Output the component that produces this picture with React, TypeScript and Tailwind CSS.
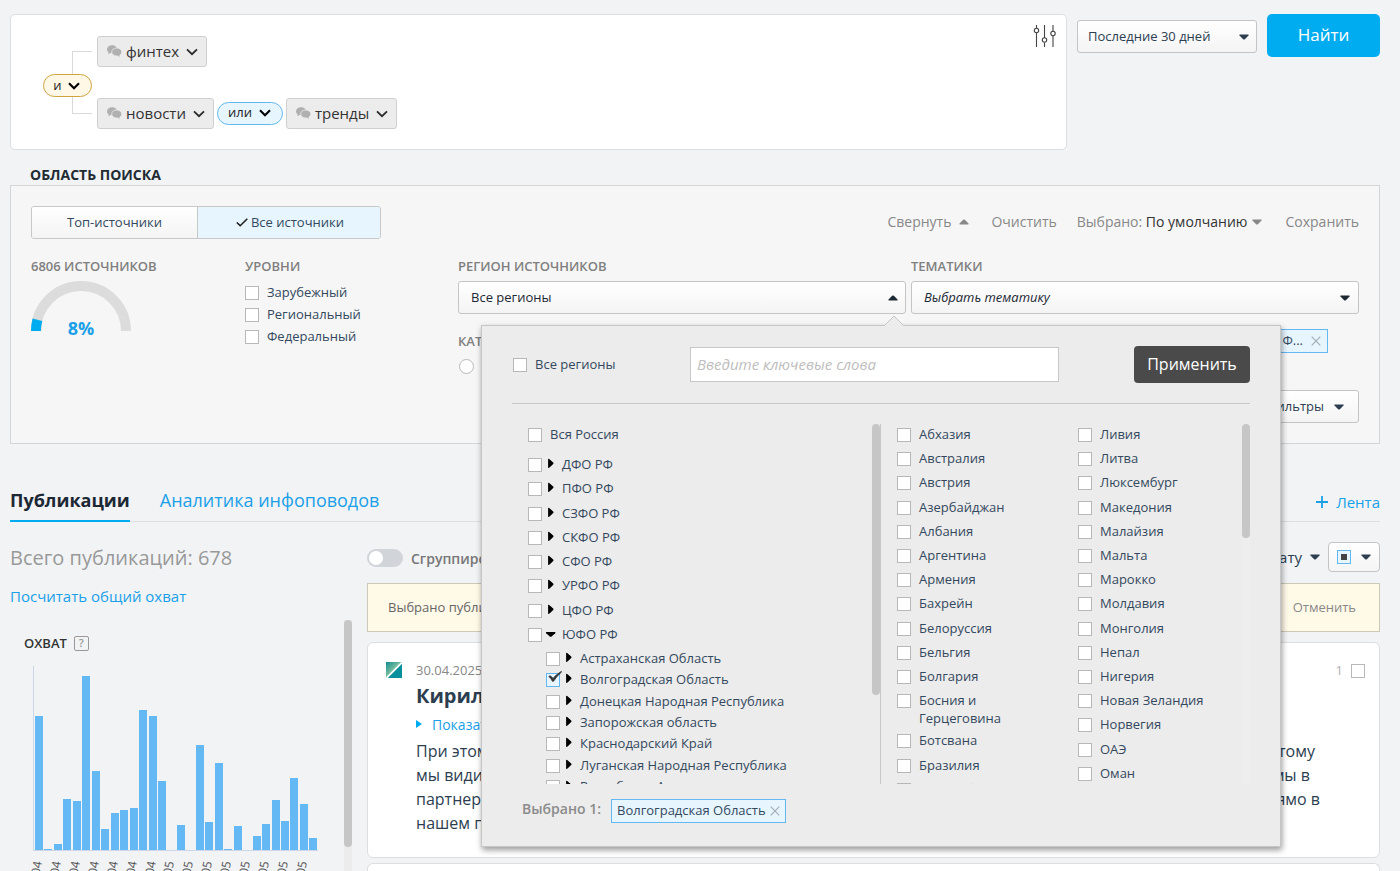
import type { ReactNode } from 'react'

const topCountries = [
  'Абхазия', 'Австралия', 'Австрия', 'Азербайджан', 'Албания', 'Аргентина', 'Армения', 'Бахрейн',
  'Белоруссия', 'Бельгия', 'Болгария', 'Босния и Герцеговина', 'Ботсвана', 'Бразилия', 'Великобритания',
]
const moreCountries = [
  'Ливия', 'Литва', 'Люксембург', 'Македония', 'Малайзия', 'Мальта', 'Марокко', 'Молдавия',
  'Монголия', 'Непал', 'Нигерия', 'Новая Зеландия', 'Норвегия', 'ОАЭ', 'Оман',
]
const districts = ['ДФО РФ', 'ПФО РФ', 'СЗФО РФ', 'СКФО РФ', 'СФО РФ', 'УРФО РФ', 'ЦФО РФ', 'ЮФО РФ']
const southern = [
  'Астраханская Область', 'Волгоградская Область', 'Донецкая Народная Республика', 'Запорожская область',
  'Краснодарский Край', 'Луганская Народная Республика', 'Республика Адыгея',
]
const reach = [
  134, 1, 6, 51, 49, 174, 79, 21, 37, 40, 42, 140, 134, 69, 0, 25, 0, 105, 28, 87, 1, 24, 0, 14, 26, 50, 29,
  72, 46, 12,
]

function Caret({ up = false, className = '' }: { up?: boolean; className?: string }) {
  return (
    <svg viewBox="0 0 10 6" fill="currentColor" className={`h-[6px] w-[10px] shrink-0 ${className}`}>
      {up ? (
        <path d="M.8 5.400h8.400q.8-.2.3-.9L5.900.8q-.9-.7-1.800 0L.5 4.500q-.5.7.3.9z" />
      ) : (
        <path d="M.8.6h8.400q.8.2.3.9L5.900 5.200q-.9.7-1.800 0L.5 1.500Q0 .8.8.6z" />
      )}
    </svg>
  )
}

function Chevron({ heavy = false }: { heavy?: boolean }) {
  return (
    <svg viewBox="0 0 12 8" fill="none" stroke={heavy ? '#000' : '#2b2b2b'} strokeWidth={heavy ? 2.1 : 1.8} className="h-2 w-3 shrink-0">
      <path d="M1 1.300 6 6.200 11 1.300" />
    </svg>
  )
}

function Cross() {
  return (
    <svg viewBox="0 0 10 10" stroke="#a3abb0" strokeWidth="1.1" className="h-[10px] w-[10px] shrink-0">
      <path d="M.7.7l8.600 8.600M9.300.7.7 9.300" />
    </svg>
  )
}

function Bubbles() {
  return (
    <svg viewBox="0 0 15 13" className="h-[13px] w-[15px] shrink-0">
      <path fill="#b0b0b0" d="M5 .2C2 .2 0 1.900 0 4.200c0 1.300.6 2.400 1.600 3.100L1.300 9.300l2.300-1.300c3.800.6 6.600-1 6.600-3.700C10.200 1.900 8 .2 5 .2z" />
      <path fill="#b0b0b0" stroke="#ececec" strokeWidth=".8" d="M9.700 3C6.800 3 4.700 4.800 4.700 7s2.100 4 5 4l.9-.1 2.500 1.700-.3-2.400C14 9.500 14.800 8.400 14.800 7c0-2.200-2.100-4-5.100-4z" />
    </svg>
  )
}

function Check({ label, checked = false, gap = 'gap-2', lead, children }: {
  label?: string; checked?: boolean; gap?: string; lead?: ReactNode; children?: ReactNode
}) {
  return (
    <label className={`flex items-start ${gap} text-[13px] leading-[18px]`}>
      <span className="relative mt-[3px] flex h-[14px] w-[14px] shrink-0">
        <input
          type="checkbox"
          aria-label={label}
          defaultChecked={checked}
          className="h-[14px] w-[14px] appearance-none border border-[#b8b8b8] bg-white checked:border-[#64b8f2] checked:bg-[#e7f5ff]"
        />
        {checked && (
          <svg viewBox="0 0 14 12" fill="#333" stroke="#333" strokeWidth=".8" className="pointer-events-none absolute -top-[2px] left-[2px] h-3 w-[14px]">
            <path d="M.8 5.600 2 4.700q2 1 3 2.700Q8 3.500 13.300.4l.3.5Q8.300 5.500 5.600 10.200q-.9.5-1.300-.1Q3 7.300.8 5.600z" />
          </svg>
        )}
      </span>
      {lead}
      <span>{children}</span>
    </label>
  )
}

function Twisty({ open = false }: { open?: boolean }) {
  return (
    <svg viewBox="0 0 10 10" fill="#000" className="mt-[3px] h-[10px] w-[10px] shrink-0">
      {open ? <path d="M.5 4h8.400q1 .3.3 1.200L5.600 8.500q-.9.7-1.800 0L.2 5.200Q-.4 4.200.5 4z" /> : <path d="M2.100.8q1.100 0 1.700.8L7.200 4.500q.7.8 0 1.600L3.800 9.300q-.6.7-1.700.7z" />}
    </svg>
  )
}

function Chip({ children }: { children: ReactNode }) {
  return (
    <button className="flex h-[31px] items-center gap-[7px] rounded-[3px] border border-[#cfcfcf] bg-[#ececec] pr-2 pl-[9px] text-[15px] text-[#333]">
      <span className="flex items-center gap-1">
        <Bubbles />
        {children}
      </span>
      <Chevron />
    </button>
  )
}

function Caption({ children }: { children: ReactNode }) {
  return <h3 className="text-[13px] leading-[20px] font-semibold text-[#808080]">{children}</h3>
}

function QueryBar() {
  return (
    <div className="flex items-start gap-[10px]">
      <section className="flex h-[136px] flex-1 items-start rounded-[5px] border border-[#dcdee0] bg-white pt-[21px] pr-[9px] pl-8">
        <div className="flex h-[93px] gap-[5px]">
          <div className="flex w-[49px] flex-col py-[15px]">
            <div className="ml-[29px] h-[23px] border-t border-l border-[#d9d9d9]" />
            <button className="flex h-[23px] items-center justify-center gap-[6px] rounded-full border border-[#cfa43f] bg-[#fff8e6] pr-[2px] text-[13px] text-[#222]">
              и <Chevron heavy />
            </button>
            <div className="ml-[29px] flex-1 border-b border-l border-[#d9d9d9]" />
          </div>
          <div className="flex flex-col items-start justify-between">
            <Chip>финтех</Chip>
            <div className="flex items-center gap-[3px]">
              <Chip>новости</Chip>
              <button className="flex h-[23px] items-center gap-[7px] rounded-full border border-[#64b8f2] bg-[#e7f5ff] pr-[11px] pb-px pl-[10px] text-[13px] text-[#222]">
                или <Chevron heavy />
              </button>
              <Chip>тренды</Chip>
            </div>
          </div>
        </div>
        <button aria-label="Настройки запроса" className="-mt-[11px] ml-auto">
          <svg viewBox="0 0 24 22" fill="none" stroke="#444" strokeWidth="1.1" className="h-[22px] w-6">
            <path d="M3.500 0v3M3.500 7.500V22M11.500 0v13M11.500 17.500V22M20 0v6.500M20 10.500V22" />
            <circle cx="3.500" cy="5.500" r="2.200" />
            <circle cx="11.500" cy="15" r="2.200" />
            <circle cx="20" cy="8.500" r="2.200" />
          </svg>
        </button>
      </section>
      <div className="relative mt-[6px] flex w-[180px] items-center">
        <select aria-label="Период" className="h-[33px] w-full appearance-none rounded-[3px] border border-[#c4c4c4] bg-linear-to-b from-white to-[#f4f4f4] px-[10px] text-[13px] text-[#2c3e50]">
          <option>Последние 30 дней</option>
        </select>
        <Caret className="pointer-events-none absolute right-2 text-[#2c3e50]" />
      </div>
      <button className="h-[43px] w-[113px] rounded-[5px] bg-[#00acf0] pb-[2px] text-[17px] text-white">Найти</button>
    </div>
  )
}

function Countries({ items, className }: { items: string[]; className: string }) {
  return (
    <ul className={`flex flex-col justify-between ${className}`}>
      {items.map((name) => (
        <li key={name} className="min-h-5">
          <Check>{name}</Check>
        </li>
      ))}
    </ul>
  )
}

function RegionPopup() {
  return (
    <div className="absolute top-[44px] left-[23px] z-10 w-[800px] border border-[#c6c6c6] bg-[#ececec] px-[30px] pt-5 pb-[23px] text-[#34495e] shadow-[1px_3px_6px_rgba(0,0,0,0.4)]">
      <svg viewBox="0 0 20 11" className="absolute -top-[11px] left-[402px] h-[11px] w-5">
        <path d="M0 11 10 1 20 11" fill="#ececec" stroke="#c6c6c6" />
      </svg>
      <div className="flex items-center justify-between border-b border-[#c8c8c8] pb-5">
        <div className="flex flex-1 items-center">
          <div className="w-[178px] pb-[2px] pl-px">
            <Check>Все регионы</Check>
          </div>
          <input
            aria-label="Поиск региона"
            placeholder="Введите ключевые слова"
            className="h-[35px] w-[369px] border border-[#c8c8c8] bg-white px-[6px] pb-[2px] text-[15px] italic outline-none placeholder:text-[#bdbdbd]"
          />
        </div>
        <button className="h-[37px] w-[116px] rounded-[4px] bg-[#4a4a4a] pb-[2px] text-[16px] text-white">Применить</button>
      </div>
      <div className="mt-5 flex h-[360px] overflow-hidden">
        <div className="flex w-[369px] justify-between border-r border-[#c8c8c8] pl-4">
          <div className="pt-px">
            <Check>Вся Россия</Check>
            <ul className="mt-3 flex h-[190px] flex-col justify-between">
              {districts.map((name) => (
                <li key={name} className="h-5">
                  <Check gap="gap-[4px]" lead={<Twisty open={name === 'ЮФО РФ'} />}>
                    <span className="ml-[2px]">{name}</span>
                  </Check>
                </li>
              ))}
            </ul>
            <ul className="mt-1 ml-[18px] flex h-[146px] flex-col justify-between">
              {southern.map((name) => (
                <li key={name} className="h-[18px]">
                  <Check gap="gap-[4px]" checked={name === 'Волгоградская Область'} lead={<Twisty />}>
                    <span className="ml-[2px] whitespace-nowrap">{name}</span>
                  </Check>
                </li>
              ))}
            </ul>
          </div>
          <div className="h-[271px] w-2 rounded-full bg-[#c6c6c6]" />
        </div>
        <div className="flex flex-1 pl-4">
          <Countries items={topCountries} className="mt-px h-[375px] w-[181px] pr-[50px]" />
          <Countries items={moreCountries} className="mt-px h-[359px]" />
          <div className="ml-auto w-2 bg-[#eeeeee]">
            <div className="h-[114px] rounded-full bg-[#c6c6c6]" />
          </div>
        </div>
      </div>
      <div className="mt-[15px] flex h-6 items-start gap-[10px] pl-[10px]">
        <span className="text-[14px] leading-5 font-semibold text-[#8b8b8b]">Выбрано 1:</span>
        <button className="flex h-6 items-center gap-1 border border-[#64b8f2] bg-[#e7f5ff] px-[5px] text-[13px]">
          Волгоградская Область <Cross />
        </button>
      </div>
    </div>
  )
}

function SearchScope() {
  return (
    <section>
      <h2 className="mt-[15px] mb-px ml-5 text-[14px] leading-[19px] font-bold text-[#222b33]">ОБЛАСТЬ ПОИСКА</h2>
      <div className="h-[259px] border border-[#d3d5d7] bg-[#f6f6f6] px-5 pt-5">
        <div className="flex h-[33px] items-center justify-between">
          <div className="flex h-full w-[350px] overflow-hidden rounded-[3px] border border-[#c8c8c8] text-[13px] text-[#34495e]">
            <button className="w-[166px] border-r border-[#c8c8c8] bg-linear-to-b from-white to-[#f4f4f4]">Топ-источники</button>
            <button className="flex flex-1 items-center justify-center gap-[3px] bg-[#e7f5ff] pl-[2px]">
              <svg viewBox="0 0 12 9" fill="none" stroke="#222" strokeWidth="1.600" className="h-[9px] w-3">
                <path d="M.8 4.500 4.200 7.700 11.300.8" />
              </svg>
              Все источники
            </button>
          </div>
          <div className="flex items-center pb-[2px] text-[14px] text-[#888]">
            <button className="mr-[22px] flex items-center gap-2">
              Свернуть <Caret up />
            </button>
            <button className="mr-5">Очистить</button>
            <button className="mr-[23px] flex items-center gap-[5px]">
              <span>
                Выбрано: <span className="text-[#333]">По умолчанию</span>
              </span>
              <Caret />
            </button>
            <button>Сохранить</button>
          </div>
        </div>
        <div className="mt-[17px] flex">
          <div className="w-[214px]">
            <Caption>6806 ИСТОЧНИКОВ</Caption>
            <svg viewBox="0 0 100 58" className="mt-[5px] h-[58px] w-[100px]">
              <path d="M5 50a45 45 0 0 1 90 0" fill="none" stroke="#dcdcdc" strokeWidth="10" />
              <path d="M5 50a45 45 0 0 1 1.400-11.200" fill="none" stroke="#00acf0" strokeWidth="10" />
              <text x="50" y="54" textAnchor="middle" fill="#1ba0e8" className="text-[18px] font-bold">8%</text>
            </svg>
          </div>
          <div className="w-[213px]">
            <Caption>УРОВНИ</Caption>
            <div className="mt-[7px] flex flex-col gap-1">
              {['Зарубежный', 'Региональный', 'Федеральный'].map((name) => (
                <div key={name} className="text-[#34495e]">
                  <Check>{name}</Check>
                </div>
              ))}
            </div>
          </div>
          <div className="relative flex-1">
            <Caption>РЕГИОН ИСТОЧНИКОВ</Caption>
            <div className="relative mt-[5px]">
              <button className="flex h-[33px] w-full items-center justify-between rounded-[3px] border border-[#c4c4c4] bg-linear-to-b from-white to-[#f4f4f4] pr-[7px] pl-3 text-[13px] text-[#1c2833]">
                Все регионы <Caret up />
              </button>
              <RegionPopup />
            </div>
            <div className="mt-[17px]">
              <Caption>КАТЕГОРИИ</Caption>
            </div>
            <input type="radio" aria-label="Все категории" className="mt-2 ml-px block h-[15px] w-[15px] appearance-none rounded-full border border-[#b8b8b8] bg-white" />
          </div>
          <div className="ml-[5px] flex flex-1 flex-col">
            <Caption>ТЕМАТИКИ</Caption>
            <div className="relative mt-[5px] flex items-center">
              <select aria-label="Тематики" className="h-[33px] w-full appearance-none rounded-[3px] border border-[#c4c4c4] bg-linear-to-b from-white to-[#f4f4f4] px-3 text-[13px] text-[#1c2833] italic">
                <option>Выбрать тематику</option>
              </select>
              <Caret className="pointer-events-none absolute right-[9px] text-[#1c2833]" />
            </div>
            <button className="mt-[15px] mr-[31px] flex h-6 items-center gap-2 self-end border border-[#64b8f2] bg-[#e7f5ff] px-[6px] text-[13px] text-[#34495e]">
              РФ, Ф... <Cross />
            </button>
            <button className="mt-[37px] flex h-[33px] items-center gap-[10px] self-end rounded-[3px] border border-[#c4c4c4] bg-linear-to-b from-white to-[#f4f4f4] px-[14px] text-[13px] text-[#2c3e50]">
              Ещё фильтры <Caret />
            </button>
          </div>
        </div>
      </div>
    </section>
  )
}

function ReachChart() {
  return (
    <svg viewBox="0 0 300 240" className="mt-[14px] h-[240px] w-[300px]" role="img" aria-label="Охват по дням">
      <path d="M9.500 0v184.500H294" fill="none" stroke="#ccd6eb" />
      {reach.map((value, i) => (
        <rect key={i} x={11 + Math.round(i * 9.46)} y={184 - value} width="8" height={value} fill="#64b9f4" />
      ))}
      {reach.map((_, i) =>
        i % 2 === 0 ? (
          <text
            key={i}
            textAnchor="end"
            transform={`translate(${18 + Math.round(i * 9.46)} 196) rotate(-80)`}
            fill="#555"
            className="text-[12px]"
          >
            {i < 14 ? `${16 + i}.04` : `${i - 13}.05`}
          </text>
        ) : null,
      )}
    </svg>
  )
}

function Sidebar() {
  return (
    <aside className="flex w-[342px] flex-col pt-[2px]">
      <h2 className="text-[20px] leading-[28px] text-[#999]">Всего публикаций: 678</h2>
      <a href="#reach" className="mt-[13px] text-[15px] leading-[22px] text-[#1ba0e8]">Посчитать общий охват</a>
      <div className="mt-[13px] flex h-[251px] justify-between overflow-hidden">
        <div className="pt-[14px] pl-[14px]">
          <div className="flex items-center gap-[7px] text-[13px] leading-[18px] font-semibold text-[#333]">
            ОХВАТ
            <button aria-label="Что такое охват" className="flex h-[15px] w-[15px] items-center justify-center rounded-[2px] border border-[#999] text-[11px] text-[#999]">?</button>
          </div>
          <ReachChart />
        </div>
        <div className="w-2 bg-[#ececec]">
          <div className="h-[227px] rounded-full bg-[#c6c6c6]" />
        </div>
      </div>
    </aside>
  )
}

function Feed() {
  return (
    <main className="ml-[15px] flex-1">
      <div className="flex h-[30px] items-center justify-between">
        <label className="flex items-center gap-2 pt-[2px] text-[14px] font-semibold text-[#777]">
          <span className="relative flex">
            <input type="checkbox" className="h-[18px] w-9 appearance-none rounded-full bg-[#d1d4d9]" />
            <span className="absolute top-[2px] left-[2px] h-[14px] w-[14px] rounded-full bg-white" />
          </span>
          Сгруппировать
        </label>
        <div className="flex items-center gap-2 text-[15px] text-[#2c3e50]">
          <button className="flex items-center gap-2">
            По дату <Caret />
          </button>
          <button aria-label="Выделение" className="flex h-[30px] w-[52px] items-center justify-between rounded-[4px] border border-[#c4c4c4] bg-linear-to-b from-white to-[#f4f4f4] px-2">
            <span className="flex h-[14px] w-[14px] items-center justify-center border border-[#64b8f2] bg-[#e7f5ff]">
              <span className="h-[6px] w-[6px] bg-[#444]" />
            </span>
            <Caret />
          </button>
        </div>
      </div>
      <div className="mt-[11px] flex h-[49px] items-center justify-between border border-[#cdc9b8] bg-[#fff9e8] pr-[23px] pl-5 text-[13px] text-[#666]">
        <span>Выбрано публикаций: 0</span>
        <button className="text-[#888]">Отменить</button>
      </div>
      <article className="mt-[10px] flex h-[216px] gap-[14px] rounded-[6px] border border-[#dcdee0] bg-white pt-[18px] pr-[14px] pl-[18px]">
        <svg viewBox="0 0 16 16" className="mt-px h-4 w-4 shrink-0">
          <defs>
            <linearGradient id="leaf" x1="0" y1="0" x2="1" y2="1">
              <stop offset="0" stopColor="#138a90" />
              <stop offset=".5" stopColor="#7fc3a0" />
            </linearGradient>
          </defs>
          <path d="M0 0h16v16H0z" fill="#078f9c" />
          <path d="M0 0h16L0 16z" fill="url(#leaf)" />
          <path d="M.5 16 16 .5" stroke="#fff" strokeWidth="1.800" />
        </svg>
        <div className="flex-1">
          <div className="flex h-5 items-center justify-between text-[13px] text-[#888]">
            <span>30.04.2025</span>
            <div className="flex items-center gap-2 text-[#b0b0b0]">
              1 <input type="checkbox" aria-label="Выбрать публикацию" className="h-[14px] w-[14px] appearance-none border border-[#b8b8b8] bg-white" />
            </div>
          </div>
          <h3 className="mt-px text-[20px] leading-[28px] font-bold text-[#2c3e50]">Кирилл</h3>
          <button className="mb-px flex h-7 items-center gap-[10px] text-[14px] text-[#1ba0e8]">
            <svg viewBox="0 0 6 8" fill="#00acf0" className="h-2 w-[6px]">
              <path d="M0 0 6 4 0 8z" />
            </svg>
            Показать
          </button>
          <div className="text-[16px] leading-6 text-[#2c3e50]">
            <p className="flex justify-between pr-[50px]">
              <span>При этом</span>
              <span>поэтому</span>
            </p>
            <p className="flex justify-between pr-[55px]">
              <span>мы видим</span>
              <span>мы в</span>
            </p>
            <p className="flex justify-between pr-[45px]">
              <span>партнеров</span>
              <span>прямо в</span>
            </p>
            <p>нашем продукте</p>
          </div>
        </div>
      </article>
      <article className="mt-[5px] h-2 rounded-t-[6px] border border-b-0 border-[#dcdee0] bg-white" />
    </main>
  )
}

export default function App() {
  return (
    <div className="min-h-screen overflow-hidden bg-[#f1f3f5] pt-[14px] pr-5 pl-[10px] font-['Open_Sans','Noto_Sans',sans-serif]">
      <QueryBar />
      <SearchScope />
      <nav className="mt-[36px] flex h-[42px] items-stretch border-b border-[#dcdee0] text-[18px] leading-[40px]">
        <a href="#publications" className="-mb-px border-b-2 border-[#00acf0] font-bold text-[#1c2833]">Публикации</a>
        <a href="#analytics" className="ml-[30px] text-[#1ba0e8]">Аналитика инфоповодов</a>
        <button className="ml-auto flex items-center gap-2 pt-[2px] text-[15px] text-[#1ba0e8]">
          <svg viewBox="0 0 12 12" stroke="#1ba0e8" strokeWidth="1.800" className="h-3 w-3">
            <path d="M6 0v12M0 6h12" />
          </svg>
          Лента
        </button>
      </nav>
      <div className="mt-5 flex items-start">
        <Sidebar />
        <Feed />
      </div>
    </div>
  )
}
